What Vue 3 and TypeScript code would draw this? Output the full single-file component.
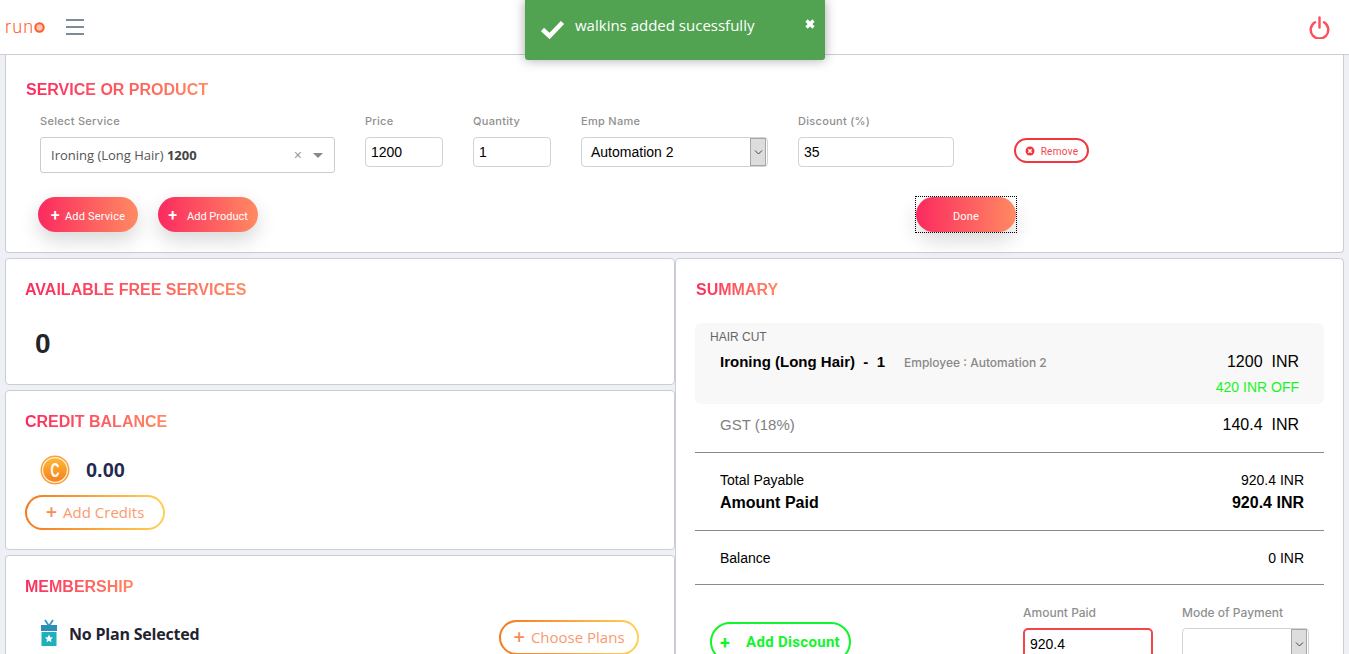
<script setup lang="ts">
const fields = [
  { label: 'Price', value: '1200', width: '78px' },
  { label: 'Quantity', value: '1', width: '78px' },
]
</script>

<template>
  <div class="page">
    <header class="topbar">
      <div class="logo">
        <span class="logo__text">run</span>
        <svg class="logo__o" width="11" height="11" viewBox="0 0 11 11">
          <circle cx="5.5" cy="5.5" r="4.2" fill="#ffc4b2" stroke="#ff5a2b" stroke-width="2" />
        </svg>
      </div>
      <div class="burger"><i></i><i></i><i></i></div>
      <svg class="power" width="21" height="23" viewBox="0 0 21 23" fill="none" stroke="#ff4d5e" stroke-width="2.4" stroke-linecap="round">
        <path d="M6 6.2a8.8 8.8 0 1 0 9 0" />
        <path d="M10.5 1.5v10" />
      </svg>
    </header>

    <div class="toast">
      <svg class="toast__check" width="25" height="20" viewBox="0 0 25 20">
        <path d="M2.5 10.5l7 6.5L22.5 3.5" fill="none" stroke="#fff" stroke-width="4.6" />
      </svg>
      <span class="toast__text">walkins added sucessfully</span>
      <svg class="toast__close" width="10" height="10" viewBox="0 0 10 10">
        <path d="M1.5 1.5l7 7M8.5 1.5l-7 7" stroke="#fff" stroke-width="3.2" />
      </svg>
    </div>

    <main class="content">
      <section class="card service">
        <h2 class="title">SERVICE OR PRODUCT</h2>
        <div class="form-row">
          <div class="field">
            <label>Select Service</label>
            <div class="picker">
              <span class="picker__value">Ironing (Long Hair) <b>1200</b></span>
              <span class="picker__clear">×</span>
              <span class="picker__caret"></span>
            </div>
          </div>
          <div v-for="f in fields" :key="f.label" class="field">
            <label>{{ f.label }}</label>
            <div class="input" :style="{ width: f.width }">{{ f.value }}</div>
          </div>
          <div class="field">
            <label>Emp Name</label>
            <div class="native-select native-select--emp">
              <span>Automation 2</span>
              <span class="native-select__btn">
                <svg width="9" height="5" viewBox="0 0 9 5"><path d="M1 .5l3.5 3.5L8 .5" fill="none" stroke="#444" /></svg>
              </span>
            </div>
          </div>
          <div class="field">
            <label>Discount (%)</label>
            <div class="input input--discount">35</div>
          </div>
          <button class="remove">
            <svg width="10" height="10" viewBox="0 0 10 10">
              <circle cx="5" cy="5" r="4.5" fill="#f4373f" />
              <path d="M3.3 3.3l3.4 3.4M6.7 3.3l-3.4 3.4" stroke="#fff" stroke-width="1.4" />
            </svg>
            Remove
          </button>
        </div>
        <div class="actions">
          <button class="grad-btn"><span class="plus">+</span>Add Service</button>
          <button class="grad-btn grad-btn--product"><span class="plus">+</span>Add Product</button>
          <div class="focus-ring">
            <button class="grad-btn">Done</button>
          </div>
        </div>
      </section>

      <div class="columns">
        <div class="left">
          <section class="card free">
            <h2 class="title">AVAILABLE FREE SERVICES</h2>
            <div class="free__count">0</div>
          </section>

          <section class="card credit">
            <h2 class="title">CREDIT BALANCE</h2>
            <div class="credit__row">
              <svg width="30" height="30" viewBox="0 0 30 30">
                <defs>
                  <linearGradient id="coin" x1="0" y1="0" x2="0" y2="1">
                    <stop offset="0" stop-color="#fdb734" />
                    <stop offset="1" stop-color="#f5811f" />
                  </linearGradient>
                </defs>
                <circle cx="15" cy="15" r="14.5" fill="#f9a03a" />
                <circle cx="15" cy="15" r="13" fill="#fff3dc" />
                <circle cx="15" cy="15" r="11.8" fill="url(#coin)" />
                <text transform="translate(15 22) scale(.62 1)" text-anchor="middle" font-family="Liberation Sans, sans-serif" font-size="20" font-weight="700" fill="#fff">C</text>
              </svg>
              <span class="credit__amount">0.00</span>
            </div>
            <button class="outline-pill"><span class="outline-pill__plus">+</span>Add Credits</button>
          </section>

          <section class="card membership">
            <h2 class="title">MEMBERSHIP</h2>
            <div class="membership__row">
              <div class="membership__plan">
                <svg width="18" height="28" viewBox="0 0 18 28">
                  <path d="M5 1l4 6 4-6" fill="none" stroke="#2b9cc4" stroke-width="1.8" />
                  <rect x="1" y="6" width="16" height="6" fill="#2b8fb8" />
                  <rect x="1.5" y="13" width="15" height="14" fill="#1fb0bb" />
                  <path d="M9 15.6l1.2 2.6 2.8.3-2.1 1.9.6 2.8L9 21.8l-2.5 1.4.6-2.8L5 18.5l2.8-.3z" fill="#fff" />
                </svg>
                <span>No Plan Selected</span>
              </div>
              <button class="outline-pill outline-pill--plans"><span class="outline-pill__plus">+</span>Choose Plans</button>
            </div>
          </section>
        </div>

        <section class="card summary">
          <h2 class="title title--summary">SUMMARY</h2>
          <div class="bill">
            <div class="bill__cat">HAIR CUT</div>
            <div class="bill__row">
              <span class="bill__name">Ironing (Long Hair) &nbsp;- &nbsp;1</span>
              <span class="bill__emp">Employee : Automation 2</span>
              <span class="bill__price">1200 &nbsp;INR</span>
            </div>
            <div class="bill__off">420 INR OFF</div>
          </div>
          <div class="gst">
            <span>GST (18%)</span>
            <span class="gst__value">140.4 &nbsp;INR</span>
          </div>
          <div class="totals">
            <div class="line"><span>Total Payable</span><span>920.4 INR</span></div>
            <div class="line line--strong"><span>Amount Paid</span><span>920.4 INR</span></div>
          </div>
          <div class="balance line"><span>Balance</span><span>0 INR</span></div>
          <div class="pay">
            <button class="discount-btn"><span class="discount-btn__plus">+</span>Add Discount</button>
            <div class="field field--paid">
              <label>Amount Paid</label>
              <div class="input input--paid">920.4</div>
            </div>
            <div class="field field--mode">
              <label>Mode of Payment</label>
              <div class="native-select native-select--mode">
                <span></span>
                <span class="native-select__btn">
                  <svg width="9" height="5" viewBox="0 0 9 5"><path d="M1 .5l3.5 3.5L8 .5" fill="none" stroke="#444" /></svg>
                </span>
              </div>
            </div>
          </div>
        </section>
      </div>
    </main>
  </div>
</template>

<style>
html,
body {
  height: 100%;
  overflow: hidden;
  background: #eef0f5;
}
</style>

<style scoped>
* {
  box-sizing: border-box;
}

.page {
  height: 654px;
  overflow: hidden;
  font-family: 'Liberation Sans', Arial, sans-serif;
  position: relative;
}

.topbar {
  height: 55px;
  background: #fff;
  border-bottom: 1px solid #c8ced3;
  display: flex;
  align-items: center;
  padding: 0 19px 0 5px;
}

.logo {
  display: flex;
  align-items: center;
  width: 61px;
  height: 14px;
}

.logo__text {
  font-family: 'Roboto', sans-serif;
  font-size: 18px;
  font-weight: 300;
  line-height: 14px;
  letter-spacing: 1.2px;
  color: #ff5a2b;
}

.burger {
  width: 18px;
  display: flex;
  flex-direction: column;
  gap: 5px;
}

.burger i {
  display: block;
  height: 2px;
  background: #7f8c97;
}

.power {
  margin-left: auto;
}

.toast {
  position: absolute;
  top: 0;
  left: 525px;
  width: 300px;
  height: 60px;
  background: #51a351;
  border-radius: 0 0 3px 3px;
  box-shadow: 0 0 12px rgba(0, 0, 0, 0.35);
  color: #fff;
}

.toast__check {
  position: absolute;
  left: 15px;
  top: 19px;
}

.toast__text {
  position: absolute;
  left: 50px;
  top: 16px;
  font-family: 'Open Sans', sans-serif;
  font-size: 15px;
  line-height: 18px;
}

.toast__close {
  position: absolute;
  left: 280px;
  top: 19px;
}

.content {
  padding: 0 5px;
}

.card {
  background: #fff;
  border: 1px solid #c8ced3;
  border-radius: 4px;
}

.title {
  display: inline-block;
  margin: 0;
  font-size: 16px;
  line-height: 18px;
  font-weight: 700;
  background: linear-gradient(90deg, #fb2a5f, #ff8a62);
  -webkit-background-clip: text;
  background-clip: text;
  color: transparent;
}

.title--summary {
  margin-left: 1px;
}

.service {
  height: 198px;
  border-top: 0;
  border-radius: 0 0 4px 4px;
  padding: 26px 20px 0 20px;
  margin-bottom: 5px;
}

.form-row {
  display: flex;
  align-items: flex-start;
  gap: 30px;
  margin-top: 15px;
  padding-left: 14px;
}

.field label {
  display: block;
  font-family: 'Inter', sans-serif;
  font-size: 11px;
  line-height: 14px;
  font-weight: 500;
  letter-spacing: 0.3px;
  color: #8f8f8f;
  margin-bottom: 9px;
}

.picker {
  width: 295px;
  height: 36px;
  border: 1px solid #ccc;
  border-radius: 3px;
  display: flex;
  align-items: center;
  padding: 0 11px 0 10px;
}

.picker__value {
  flex: 1;
  font-family: 'Open Sans', sans-serif;
  font-size: 13px;
  color: #555;
}

.picker__value b {
  color: #444;
}

.picker__clear {
  color: #999;
  font-size: 14px;
  margin-right: 11px;
}

.picker__caret {
  border-left: 5px solid transparent;
  border-right: 5px solid transparent;
  border-top: 5px solid #888;
}

.input {
  height: 30px;
  border: 1px solid #ced4da;
  border-radius: 4px;
  padding: 0 5px;
  font-size: 14px;
  line-height: 28px;
  color: #000;
}

.input--discount {
  width: 156px;
}

.native-select {
  height: 30px;
  border: 1px solid #ced4da;
  border-radius: 4px;
  display: flex;
  justify-content: space-between;
  padding-left: 9px;
  font-size: 14px;
  line-height: 28px;
  color: #000;
}

.native-select--emp {
  width: 187px;
}

.native-select__btn {
  width: 16px;
  margin: 0 1px 0 0;
  background: #ddd;
  border: 1px solid #a6a6a6;
  display: flex;
  align-items: center;
  justify-content: center;
}

.remove {
  margin: 24px 0 0 30px;
  width: 75px;
  height: 25px;
  border: 2px solid #f4373f;
  border-radius: 13px;
  background: #fff;
  color: #f4454c;
  font-family: 'Roboto', sans-serif;
  font-size: 10px;
  letter-spacing: 0.3px;
  display: flex;
  align-items: center;
  justify-content: center;
  gap: 6px;
  padding: 1px 0 0;
}

.actions {
  display: flex;
  align-items: flex-start;
  gap: 20px;
  margin-top: 24px;
  padding-left: 12px;
}

.grad-btn {
  width: 100px;
  height: 35px;
  border: 0;
  border-radius: 18px;
  background: linear-gradient(90deg, #fb2a5f, #ff8a62);
  box-shadow: 0 8px 20px rgba(0, 0, 0, 0.16);
  color: #fff;
  font-family: 'Roboto', sans-serif;
  font-size: 11px;
  letter-spacing: 0.2px;
  display: flex;
  align-items: center;
  justify-content: center;
  padding: 3px 0 0;
}

.plus {
  font-size: 16px;
  font-weight: 500;
  margin-right: 5px;
  line-height: 16px;
}

.grad-btn--product {
  letter-spacing: 0;
}

.grad-btn--product .plus {
  margin-right: 10px;
}

.focus-ring {
  margin: -1px 0 0 637px;
  border: 1px dotted #000;
}

.columns {
  display: flex;
  align-items: flex-start;
}

.left {
  width: 670px;
  flex: none;
  display: flex;
  flex-direction: column;
  gap: 5px;
}

.free {
  height: 127px;
  padding: 22px 19px 0;
}

.free__count {
  margin: 29px 0 0 10px;
  font-size: 28px;
  line-height: 32px;
  font-weight: 700;
  color: #212529;
}

.credit {
  height: 160px;
  padding: 22px 19px 0;
}

.credit__row {
  display: flex;
  align-items: center;
  gap: 16px;
  margin: 24px 0 10px 15px;
}

.credit__amount {
  font-size: 20px;
  font-weight: 700;
  color: #23284f;
}

.outline-pill {
  width: 140px;
  height: 35px;
  border: 2px solid transparent;
  border-radius: 18px;
  background: linear-gradient(#fff, #fff) padding-box,
    linear-gradient(90deg, #f4791f, #ffd157) border-box;
  color: #fb9a6e;
  font-family: 'Open Sans', sans-serif;
  font-size: 15px;
  display: flex;
  align-items: center;
  justify-content: center;
  padding: 0 0 2px;
}

.outline-pill__plus {
  font-size: 20px;
  font-weight: 600;
  line-height: 20px;
  margin-right: 6px;
  color: #f98a55;
}

.membership {
  height: 140px;
  padding: 22px 19px 0;
}

.membership__row {
  display: flex;
  justify-content: space-between;
  align-items: flex-start;
  margin-top: 24px;
}

.membership__plan {
  display: flex;
  align-items: center;
  gap: 11px;
  margin-left: 15px;
  font-family: 'Open Sans', sans-serif;
  font-size: 16px;
  font-weight: 700;
  letter-spacing: -0.2px;
  color: #1f2430;
}

.membership__plan svg {
  flex: none;
  margin-top: -1px;
}

.outline-pill--plans {
  margin-right: 16px;
}

.summary {
  flex: 1;
  height: 440px;
  padding: 22px 19px 0 19px;
}

.bill {
  height: 81px;
  margin-top: 24px;
  background: #f8f8f8;
  border-radius: 6px;
  padding: 7px 25px 0 15px;
}

.bill__cat {
  font-size: 12px;
  line-height: 14px;
  color: #666;
}

.bill__row {
  display: flex;
  align-items: baseline;
  margin: 9px 0 0 10px;
}

.bill__name {
  font-size: 15px;
  line-height: 18px;
  font-weight: 700;
  color: #000;
}

.bill__emp {
  margin-left: 19px;
  font-family: 'Inter', sans-serif;
  font-size: 12px;
  font-weight: 500;
  color: #888;
}

.bill__price {
  margin-left: auto;
  font-size: 16px;
  color: #000;
}

.bill__off {
  margin-top: 8px;
  text-align: right;
  font-size: 14px;
  line-height: 16px;
  color: #17f51f;
}

.gst {
  height: 49px;
  border-bottom: 1px solid #8a8a8a;
  display: flex;
  justify-content: space-between;
  align-items: baseline;
  padding: 13px 25px 0 25px;
  font-size: 15px;
  line-height: 16px;
  color: #808080;
}

.gst__value {
  color: #000;
  font-size: 16px;
}

.line {
  display: flex;
  justify-content: space-between;
  font-size: 14px;
  line-height: 16px;
  color: #000;
}

.totals {
  height: 78px;
  border-bottom: 1px solid #8a8a8a;
  padding: 19px 20px 0 25px;
}

.line--strong {
  margin-top: 5px;
  font-size: 16px;
  line-height: 20px;
  font-weight: 700;
}

.balance {
  height: 54px;
  border-bottom: 1px solid #8a8a8a;
  padding: 19px 20px 0 25px;
}

.pay {
  display: flex;
  align-items: flex-start;
  padding: 21px 0 0 15px;
}

.discount-btn {
  width: 141px;
  height: 40px;
  margin-top: 16px;
  border: 2px solid #13f52b;
  border-radius: 20px;
  background: #fff;
  color: #13f52b;
  font-family: 'Roboto', sans-serif;
  font-size: 15px;
  font-weight: 700;
  letter-spacing: 0.3px;
  display: flex;
  align-items: center;
  padding: 0 0 0 8px;
}

.discount-btn__plus {
  font-size: 18px;
  margin-right: 16px;
}

.field--paid {
  margin-left: 172px;
  width: 130px;
}

.field--paid label,
.field--mode label {
  font-size: 12px;
  letter-spacing: 0;
  margin-bottom: 8px;
}

.input--paid {
  height: 32px;
  border-color: #f4454c;
  border-width: 2px;
  border-radius: 5px;
  padding-left: 5px;
  line-height: 28px;
}

.field--mode {
  margin-left: 29px;
  width: 127px;
}

.native-select--mode {
  height: 32px;
  margin-top: 1px;
}
</style>
